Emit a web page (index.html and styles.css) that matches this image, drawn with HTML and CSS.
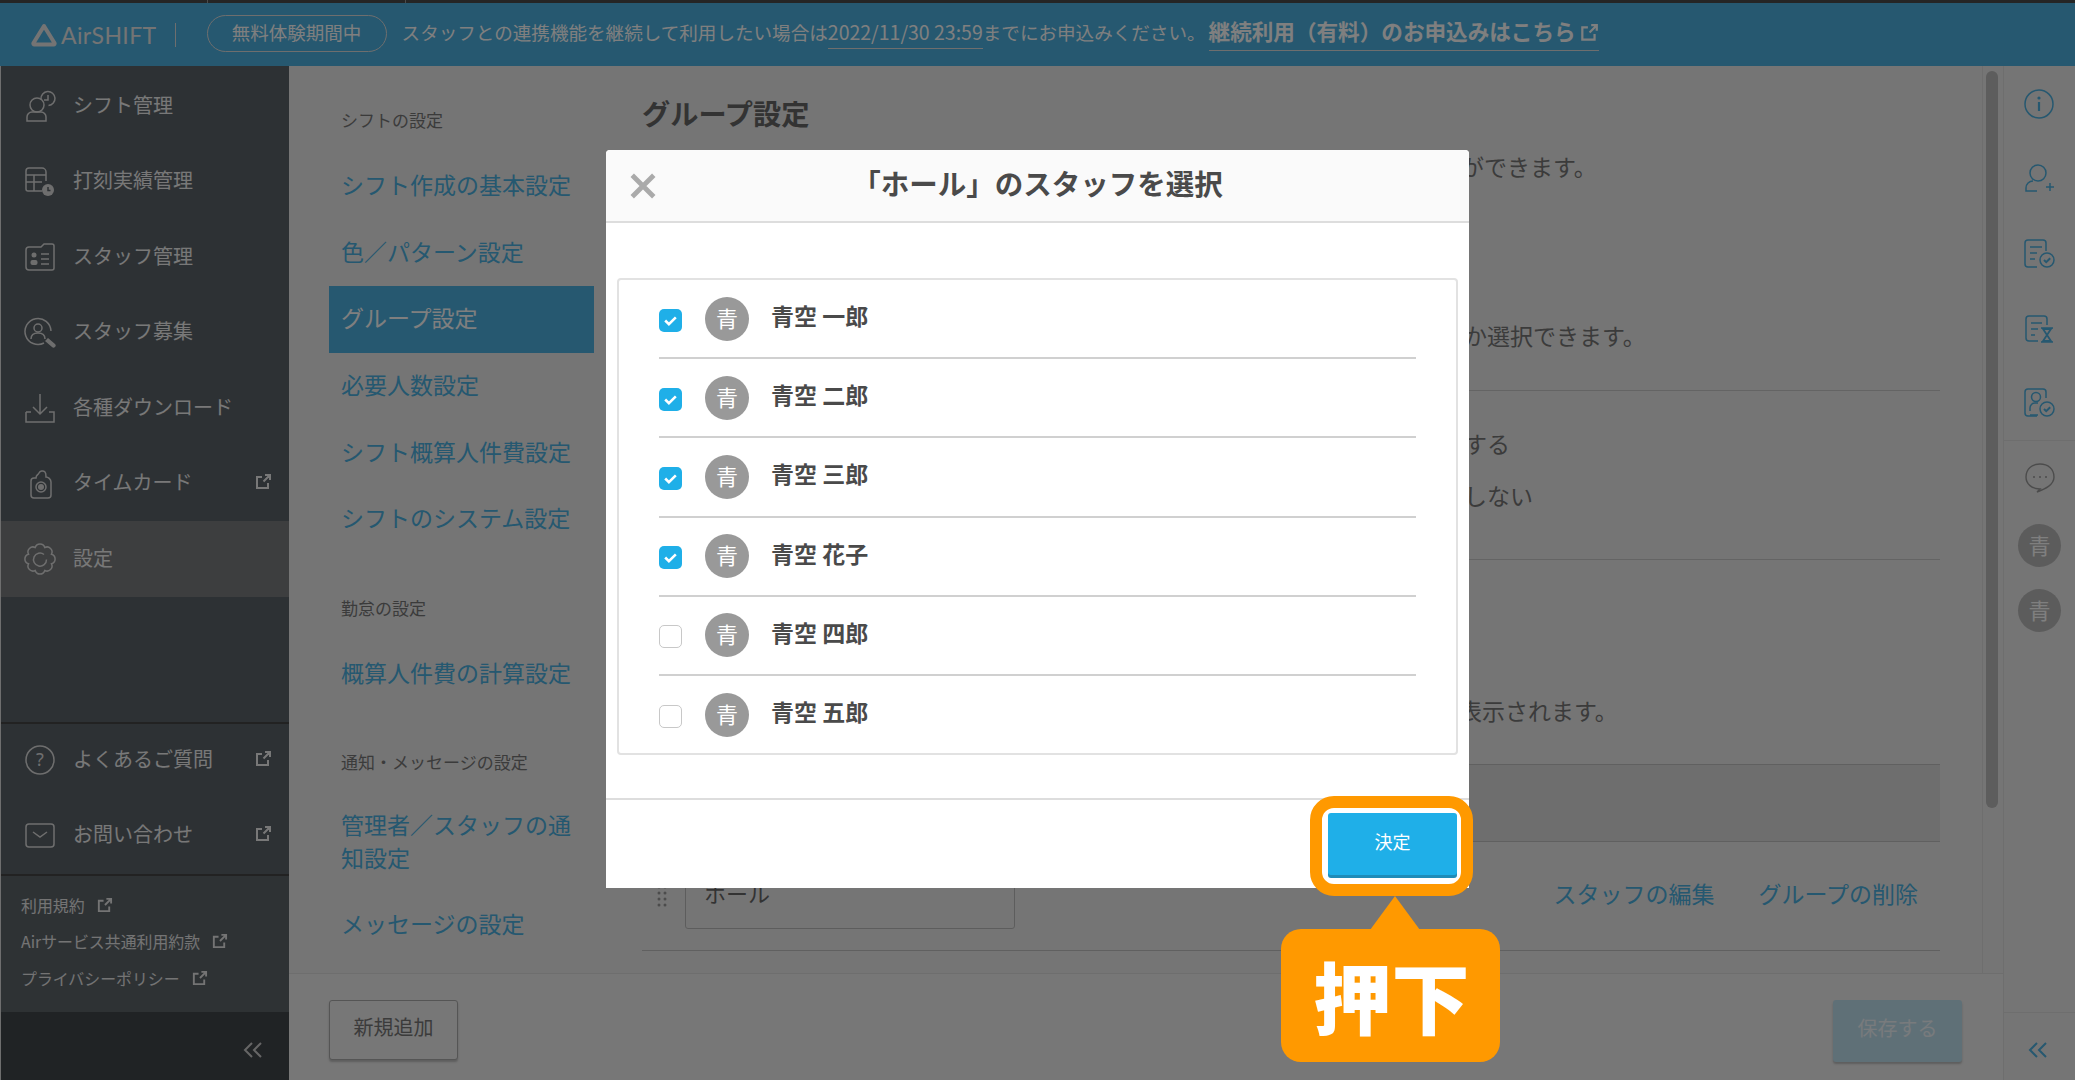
FILE: index.html
```html
<!DOCTYPE html>
<html lang="ja">
<head>
<meta charset="utf-8">
<title>AirSHIFT グループ設定</title>
<link rel="stylesheet" href="styles.css">
</head>
<body>
<svg class="defs" width="0" height="0">
  <symbol id="ext" viewBox="0 0 18 18"><path d="M8 4H3v11h11v-5M9.500 8.500 16 2M11 2h5v5" fill="none" stroke="currentColor" stroke-width="2"/></symbol>
  <symbol id="chev" viewBox="0 0 20 20"><path d="M9 3 2 10l7 7M18 3l-7 7 7 7" fill="none" stroke="currentColor" stroke-width="2"/></symbol>
</svg>
<div class="strip"><i></i><i></i></div>
<header class="topbar">
  <div class="logo">
    <svg class="logo-mark" viewBox="0 0 26 24"><path d="M13 3 23.500 20a1 1 0 0 1-1 1.500h-19a1 1 0 0 1-1-1.500z" fill="none" stroke="currentColor" stroke-width="4" stroke-linejoin="round"/></svg>
    <span class="logo-text">AirSHIFT</span>
  </div>
  <span class="logo-sep"></span>
  <span class="badge">無料体験期間中</span>
  <span class="notice">スタッフとの連携機能を継続して利用したい場合は<span class="date">2022/11/30 23:59</span>までにお申込みください。</span>
  <a class="cta">継続利用（有料）のお申込みはこちら<svg class="ext-cta"><use href="#ext"/></svg></a>
</header>
<div class="app">
  <aside class="sidebar">
    <nav class="side-nav">
      <a class="side-item"><svg class="side-ico" viewBox="0 0 32 32"><g fill="none" stroke="currentColor" stroke-width="1.500"><circle cx="13" cy="15" r="7"/><path d="M3 31v-4a5 5 0 0 1 5-5h9a5 5 0 0 1 5 5v4z"/><path d="M17 9a7 7 0 1 1 7.500 6.500M24 5v5h-4"/></g></svg><span>シフト管理</span></a>
      <a class="side-item"><svg class="side-ico" viewBox="0 0 32 32"><g fill="none" stroke="currentColor" stroke-width="1.500"><path d="M22 16V7a4 4 0 0 0-4-4H5a3 3 0 0 0-3 3v18a2 2 0 0 0 2 2h14M2 10h20M2 17h16M10 10v16"/></g><circle cx="24" cy="25" r="6" fill="currentColor"/><path d="M24 22v3.500h2.500" fill="none" stroke="#5a6268" stroke-width="1.500"/></svg><span>打刻実績管理</span></a>
      <a class="side-item"><svg class="side-ico" viewBox="0 0 32 32"><g fill="none" stroke="currentColor" stroke-width="1.500"><path d="M2 9a3 3 0 0 1 3-3h12l3-3h8a2 2 0 0 1 2 2v22a2 2 0 0 1-2 2H5a3 3 0 0 1-3-3z"/><path d="M17 13h8M17 18h8M17 23h8"/></g><circle cx="10" cy="14" r="2.500" fill="currentColor"/><rect x="6.500" y="19" width="7" height="5" rx="2" fill="currentColor"/></svg><span>スタッフ管理</span></a>
      <a class="side-item"><svg class="side-ico" viewBox="0 0 32 32"><g fill="none" stroke="currentColor" stroke-width="1.500"><path d="M20 27A13 13 0 1 1 27 15"/><circle cx="14" cy="12" r="4"/><path d="M7 23c0-4 3-6 7-6s7 2 7 6"/></g><path d="m21 25 3-3 7 6a2 2 0 0 1-3 3z" fill="currentColor"/></svg><span>スタッフ募集</span></a>
      <a class="side-item"><svg class="side-ico" viewBox="0 0 32 32"><path d="M16 2v20M9 15l7 7 7-7M2 20v10h28V20H25M7 20H2" fill="none" stroke="currentColor" stroke-width="1.500"/></svg><span>各種ダウンロード</span></a>
      <a class="side-item"><svg class="side-ico" viewBox="0 0 32 32"><g fill="none" stroke="currentColor" stroke-width="1.500"><path d="M7 14a3 3 0 0 1 3-3h2c0-3 2-3 3-5 1-2 4-3 6-1 1 1 1 3 1 5 2 0 5 2 5 5v13a3 3 0 0 1-3 3H10a3 3 0 0 1-3-3z"/><circle cx="17" cy="20" r="5"/></g><circle cx="17" cy="20" r="3" fill="currentColor"/></svg><span>タイムカード</span><svg class="ext"><use href="#ext"/></svg></a>
      <a class="side-item is-active"><svg class="side-ico" viewBox="0 0 32 32"><g fill="none" stroke="currentColor" stroke-width="1.500"><path d="M20.800 4.500A5 5 0 0 1 27.500 11.200 5 5 0 0 1 27.500 20.800 5 5 0 0 1 20.800 27.500 5 5 0 0 1 11.200 27.500 5 5 0 0 1 4.500 20.800 5 5 0 0 1 4.500 11.200 5 5 0 0 1 11.200 4.500 5 5 0 0 1 20.800 4.500z"/><path d="M20 11.500a6.500 6.500 0 1 0 2.500 5"/></g></svg><span>設定</span></a>
    </nav>
    <div class="side-bottom">
      <a class="side-item"><svg class="side-ico" viewBox="0 0 32 32"><circle cx="16" cy="16" r="14" fill="none" stroke="currentColor" stroke-width="1.500"/><text x="16" y="22" text-anchor="middle" class="q-mark">?</text></svg><span>よくあるご質問</span><svg class="ext"><use href="#ext"/></svg></a>
      <a class="side-item"><svg class="side-ico" viewBox="0 0 32 32"><rect x="2" y="5" width="28" height="23" rx="3" fill="none" stroke="currentColor" stroke-width="1.500"/><path d="m9 13 7 5 7-5" fill="none" stroke="currentColor" stroke-width="1.500"/></svg><span>お問い合わせ</span><svg class="ext"><use href="#ext"/></svg></a>
      <div class="legal">
        <a>利用規約<svg class="ext-s"><use href="#ext"/></svg></a>
        <a>Airサービス共通利用約款<svg class="ext-s"><use href="#ext"/></svg></a>
        <a>プライバシーポリシー<svg class="ext-s"><use href="#ext"/></svg></a>
      </div>
      <div class="side-collapse"><svg class="chev"><use href="#chev"/></svg></div>
    </div>
  </aside>

  <div class="work">
    <div class="work-main">
      <nav class="subnav">
        <p class="sub-label">シフトの設定</p>
        <a class="sub-item">シフト作成の基本設定</a>
        <a class="sub-item">色／パターン設定</a>
        <a class="sub-item is-active">グループ設定</a>
        <a class="sub-item">必要人数設定</a>
        <a class="sub-item">シフト概算人件費設定</a>
        <a class="sub-item">シフトのシステム設定</a>
        <p class="sub-label gap-a">勤怠の設定</p>
        <a class="sub-item">概算人件費の計算設定</a>
        <p class="sub-label gap-b">通知・メッセージの設定</p>
        <a class="sub-item multi">管理者／スタッフの通知設定</a>
        <a class="sub-item">メッセージの設定</a>
      </nav>
      <section class="content">
        <h1 class="title">グループ設定</h1>
        <p class="tail t1">ができます。</p>
        <p class="tail t2">か選択できます。</p>
        <hr class="rule r1">
        <p class="tail t3">する</p>
        <p class="tail t4">しない</p>
        <hr class="rule r2">
        <p class="tail t5">表示されます。</p>
        <div class="band"></div>
        <div class="group-row">
          <svg class="grip" viewBox="0 0 10 24"><g fill="currentColor"><circle cx="2" cy="3" r="1.500"/><circle cx="8" cy="3" r="1.500"/><circle cx="2" cy="9" r="1.500"/><circle cx="8" cy="9" r="1.500"/><circle cx="2" cy="15" r="1.500"/><circle cx="8" cy="15" r="1.500"/><circle cx="2" cy="21" r="1.500"/><circle cx="8" cy="21" r="1.500"/></g></svg>
          <div class="field">ホール</div>
          <a class="row-link first">スタッフの編集</a>
          <a class="row-link">グループの削除</a>
        </div>
      </section>
      <div class="track"><div class="thumb"></div></div>
    </div>
    <footer class="work-foot">
      <button class="btn-new">新規追加</button>
      <button class="btn-save">保存する</button>
    </footer>
  </div>

  <aside class="rail">
    <div class="rail-top">
      <svg class="rail-ico" viewBox="0 0 32 32"><circle cx="16" cy="16" r="14" fill="none" stroke="currentColor" stroke-width="1.500"/><circle cx="16" cy="10" r="1.600" fill="currentColor"/><path d="M16 14v9" stroke="currentColor" stroke-width="2.200"/></svg>
      <svg class="rail-ico" viewBox="0 0 32 32"><g fill="none" stroke="currentColor" stroke-width="1.500"><circle cx="15" cy="10" r="8"/><path d="M14 28H3v-3a7 7 0 0 1 7-7M23 24h8M27 20v8"/></g></svg>
      <svg class="rail-ico" viewBox="0 0 32 32"><g fill="none" stroke="currentColor" stroke-width="1.500"><path d="M23 14V6a3 3 0 0 0-3-3H5a3 3 0 0 0-3 3v21a3 3 0 0 0 3 3h9M7 10h12M7 16h7M7 22h5"/><circle cx="24" cy="23" r="7"/><path d="m21 23 2.200 2.200 4-4" stroke-width="2"/></g></svg>
      <svg class="rail-ico" viewBox="0 0 32 32"><g fill="none" stroke="currentColor" stroke-width="1.500"><path d="M24 13V7a3 3 0 0 0-3-3H6a3 3 0 0 0-3 3v19a3 3 0 0 0 3 3h9M8 11h11M8 17h7M8 23h4M18 16h12M18 30h12"/></g><path d="M20 17h8l-4 6 4 6h-8l4-6z" fill="none" stroke="currentColor" stroke-width="1.800"/></svg>
      <svg class="rail-ico" viewBox="0 0 32 32"><g fill="none" stroke="currentColor" stroke-width="1.500"><path d="M23 12V6a3 3 0 0 0-3-3H5a3 3 0 0 0-3 3v21a3 3 0 0 0 3 3h9"/><circle cx="13" cy="11" r="4.500"/><path d="M7 25v-3a5 5 0 0 1 5-5h3M7 29h8"/><circle cx="24" cy="23" r="7"/><path d="m21 23 2.200 2.200 4-4" stroke-width="2"/></g></svg>
    </div>
    <div class="rail-mid">
      <svg class="rail-chat" viewBox="0 0 32 32"><path d="M16 2c8 0 14 5 14 13 0 8-9 12-17 15l3-3C8 27 2 22 2 15 2 7 8 2 16 2z" fill="none" stroke="currentColor" stroke-width="1.400"/><g fill="currentColor"><circle cx="10" cy="15" r="1"/><circle cx="16" cy="15" r="1"/><circle cx="22" cy="15" r="1"/></g></svg>
      <span class="rail-avatar">青</span>
      <span class="rail-avatar">青</span>
    </div>
    <div class="rail-foot"><svg class="chev-blue"><use href="#chev"/></svg></div>
  </aside>
</div>

<div class="overlay"></div>

<div class="modal">
  <div class="modal-head">
    <svg class="modal-close" viewBox="0 0 26 26"><path d="m3 3 20 20M23 3 3 23" fill="none" stroke="currentColor" stroke-width="4.500"/></svg>
    <h2 class="modal-title">「ホール」のスタッフを選択</h2>
  </div>
  <div class="modal-body">
    <ul class="staff-list">
      <li class="staff"><span class="check on"><svg viewBox="0 0 16 16"><path d="m3 8 3.500 3.500L13 5" fill="none" stroke="#fff" stroke-width="2.400"/></svg></span><span class="avatar">青</span><span class="name">青空 一郎</span></li>
      <li class="staff"><span class="check on"><svg viewBox="0 0 16 16"><path d="m3 8 3.500 3.500L13 5" fill="none" stroke="#fff" stroke-width="2.400"/></svg></span><span class="avatar">青</span><span class="name">青空 二郎</span></li>
      <li class="staff"><span class="check on"><svg viewBox="0 0 16 16"><path d="m3 8 3.500 3.500L13 5" fill="none" stroke="#fff" stroke-width="2.400"/></svg></span><span class="avatar">青</span><span class="name">青空 三郎</span></li>
      <li class="staff"><span class="check on"><svg viewBox="0 0 16 16"><path d="m3 8 3.500 3.500L13 5" fill="none" stroke="#fff" stroke-width="2.400"/></svg></span><span class="avatar">青</span><span class="name">青空 花子</span></li>
      <li class="staff"><span class="check"></span><span class="avatar">青</span><span class="name">青空 四郎</span></li>
      <li class="staff"><span class="check"></span><span class="avatar">青</span><span class="name">青空 五郎</span></li>
    </ul>
  </div>
  <div class="modal-foot"><button class="btn-ok">決定</button></div>
</div>

<div class="ring"></div>
<div class="callout">押下</div>
</body>
</html>
```

FILE: styles.css
```css
* { box-sizing: border-box; }
html, body { margin: 0; height: 1080px; overflow: hidden; }
body {
  position: relative;
  display: flex;
  flex-direction: column;
  font-family: "Noto Sans CJK JP", "Noto Sans", sans-serif;
  background: #eaeaea;
  color: #444;
}
a { color: inherit; text-decoration: none; }
p, h1, h2, ul { margin: 0; padding: 0; }
.defs { position: absolute; }

.strip { height: 3px; background: #4a4a4a; display: flex; }
.strip i { width: 1px; background: #999; margin-left: 207px; }
.strip i + i { margin-left: 197px; }

.topbar {
  height: 63px;
  flex: none;
  background: #4cb0e0;
  color: #fff;
  display: flex;
  align-items: center;
  padding-left: 31px;
}
.logo { display: flex; align-items: center; color: #e8e8e8; }
.logo-mark { width: 26px; height: 24px; }
.logo-text { font-family: "Lato", sans-serif; font-size: 23px; margin-left: 4px; letter-spacing: .4px; line-height: 24px; }
.logo-sep { width: 1px; height: 24px; background: #ddd; margin-left: 18px; }
.badge {
  width: 180px; height: 37px;
  margin-left: 31px;
  border: 1.500px solid #ddd;
  border-radius: 19px;
  font-size: 18.500px;
  line-height: 32px;
  text-align: center;
  margin-top: -2px;
}
.notice { font-size: 18.570px; margin-left: 15px; white-space: nowrap; margin-top: -7px; }
.date { border-bottom: 1px solid #ddd; padding-bottom: 2px; font-size: 19.500px; }
.cta {
  font-size: 21.600px; font-weight: 700; margin-left: 3px; white-space: nowrap;
  border-bottom: 1.500px solid #ddd; display: flex; align-items: center; height: 35px; margin-top: -2px; padding-bottom: 6px;
}
.ext-cta { width: 20px; height: 20px; margin: 5px 0 0 3px; }

.app { flex: 1; display: flex; min-height: 0; }

.sidebar {
  width: 289px; flex: none;
  border-left: 1px solid #ddd;
  background: #5a6268;
  color: #fff;
  display: flex; flex-direction: column;
  justify-content: space-between;
}
.side-nav { padding-top: 2px; }
.side-item {
  height: 75.500px;
  display: flex; align-items: center;
  font-size: 20px;
  padding: 0 17px 3px 23px;
  color: #f0f0f0;
}
.side-item span { margin-left: 17px; flex: 1; }
.side-item.is-active { background: #7a7c7e; }
.side-ico { width: 32px; height: 32px; flex: none; color: #ddd; margin-top: 3px; }
.q-mark { font-size: 18px; fill: currentColor; font-family: "Noto Sans", sans-serif; }
.ext { width: 18px; height: 18px; flex: none; }
.side-bottom { border-top: 2px solid #444; }
.side-bottom .side-item { height: 75px; padding-bottom: 6px; }
.legal {
  height: 138px;
  border-top: 2px solid #444;
  padding: 11px 0 0 20px;
  font-size: 15.900px;
  color: #e8e8e8;
  background: #5c6468;
}
.legal a { display: flex; align-items: center; height: 36.500px; }
.ext-s { width: 17px; height: 17px; margin-left: 11px; }
.side-collapse { height: 68px; background: #41474b; display: flex; align-items: center; justify-content: flex-end; padding: 8px 26px 0 0; }
.chev { width: 20px; height: 20px; color: #ccc; }

.work { flex: 1; display: flex; flex-direction: column; min-width: 0; }
.work-main { flex: 1; display: flex; min-height: 0; overflow: hidden; }
.subnav { width: 317px; flex: none; padding: 41px 0 0 40px; }
.sub-label { font-size: 17px; line-height: 26px; color: #777; padding-left: 12px; }
.sub-item { display: flex; align-items: center; width: 265px; height: 66.600px; padding: 0 12px 4px; font-size: 23px; color: #4ab0e0; }
.sub-item.is-active { background: #4cb0e0; color: #fff; }
.sub-label + .sub-item { margin-top: 20px; }
.sub-item.multi { height: 66px; line-height: 33px; margin-top: 33px; padding-bottom: 0; margin-bottom: 18px; }
.gap-a { margin-top: 42px; }
.gap-b { margin-top: 42px; }

.content { flex: 1; min-width: 0; padding: 28px 42px 0 36px; }
.title { font-size: 28.200px; font-weight: 700; line-height: 38px; color: #666; margin-bottom: 2px; }
.tail { font-size: 23px; line-height: 32px; color: #777; padding-left: 822px; white-space: nowrap; }
.t1 { margin-top: 18px; padding-left: 819px; }
.t2 { margin-top: 137px; }
.t3 { margin-top: 36px; }
.t4 { margin-top: 20px; }
.t5 { margin-top: 134px; padding-left: 817px; }
.rule { margin: 0; border: 0; height: 1px; background: #c8c8c8; }
.r1 { margin-top: 39px; }
.r2 { margin-top: 48px; }
.band { margin-top: 38px; height: 78px; background: #dcdcdc; border-bottom: 1px solid #c0c0c0; border-top: 1px solid #c0c0c0; }
.group-row { height: 109px; border-bottom: 1px solid #c0c0c0; display: flex; align-items: center; padding-right: 22px; }
.grip { width: 10px; height: 24px; margin-left: 15px; color: #999; }
.field { width: 330px; height: 67px; margin: -2px 0 0 18px; background: #ebebeb; border: 1.500px solid #bbb; border-radius: 3px; padding-left: 18px; font-size: 22px; line-height: 58px; color: #666; }
.row-link { font-size: 23px; color: #4ab0e0; margin-left: 44px; padding-bottom: 6px; }
.row-link.first { margin-left: auto; }

.track { width: 21px; flex: none; border-left: 1px solid #dcdcdc; padding: 5px 5px 0 3px; }
.thumb { height: 737px; border-radius: 6px; background: #bababa; width: 12px; }

.work-foot {
  height: 107px; flex: none;
  background: #eeeeee;
  border-top: 1px solid #dddddd;
  display: flex; justify-content: space-between;
  padding: 26px 41px 0 40px;
}
.btn-new, .btn-save { font-family: inherit; font-size: 20px; height: 60px; border-radius: 3px; padding-bottom: 8px; }
.btn-new { width: 129px; background: #eee; border: 1.500px solid #aaa; color: #777; box-shadow: 0 2px 2px #bbb; }
.btn-save { width: 129px; border: 0; color: #f0f6fa; background: #bfe0ef; box-shadow: 0 2px 2px #bbb; height: 62px; }

.rail { width: 72px; flex: none; border-left: 1px solid #dcdcdc; display: flex; flex-direction: column; }
.rail-top { height: 375px; border-bottom: 1px solid #dcdcdc; display: flex; flex-direction: column; align-items: center; padding: 22px 2px 0 0; gap: 42.500px; color: #4cb0e0; }
.rail-ico { width: 32px; height: 32px; flex: none; }
.rail-mid { flex: 1; display: flex; flex-direction: column; align-items: center; padding-top: 21px; }
.rail-chat { width: 32px; height: 32px; color: #999; margin-bottom: 30px; }
.rail-avatar { width: 43px; height: 43px; border-radius: 50%; background: #b8b8b8; color: #fff; font-size: 22px; line-height: 41px; text-align: center; margin-bottom: 22px; }
.rail-foot { height: 68px; border-top: 1px solid #dcdcdc; display: flex; align-items: center; justify-content: center; padding: 6px 4px 0 0; }
.chev-blue { width: 20px; height: 20px; color: #4cb0e0; }

.overlay { position: absolute; inset: 0; background: rgba(0, 0, 0, .5); }

.modal {
  position: absolute; left: 606px; top: 150px;
  width: 863px; height: 738px;
  background: #fff;
  border-radius: 4px 4px 0 0;
  display: flex; flex-direction: column;
}
.modal-head { position: relative; height: 73px; flex: none; background: #fafafa; border-bottom: 2px solid #ddd; display: flex; align-items: center; justify-content: center; border-radius: 4px 4px 0 0; padding-bottom: 6px; }
.modal-close { position: absolute; left: 23px; top: 22px; width: 28px; height: 28px; color: #aaa; }
.modal-title { font-size: 28.500px; font-weight: 700; color: #4a4a4a; }
.modal-body { flex: 1; padding: 55px 11px 0; }
.staff-list { list-style: none; border: 2px solid #e2e2e2; border-radius: 4px; height: 477px; padding: 0 40px; }
.staff { height: 79.200px; border-bottom: 2px solid #d0d0d0; display: flex; align-items: center; }
.staff:last-child { border-bottom-color: transparent; }
.check { width: 23px; height: 23px; border-radius: 5px; border: 1.500px solid #c8c8c8; background: #fff; margin-top: 3px; }
.check.on { background: #1fafe8; border: 0; padding: 3px; display: block; }
.check svg { display: block; width: 17px; height: 17px; }
.avatar { width: 44px; height: 44px; margin-left: 23px; border-radius: 50%; background: #999; color: #fff; font-size: 22px; line-height: 40px; text-align: center; }
.name { margin-left: 22px; font-size: 23px; font-weight: 700; color: #4a4a4a; margin-top: -7px; }
.modal-foot { height: 90px; flex: none; border-top: 2px solid #ddd; display: flex; justify-content: flex-end; padding: 13px 12px 0 0; }
.btn-ok { width: 129px; height: 62px; border: 0; border-radius: 3px; background: #1fafe8; box-shadow: 0 3px 0 #1f8cb8; color: #fff; font-family: inherit; font-size: 18px; padding-bottom: 7px; }

.ring { position: absolute; left: 1310px; top: 796px; width: 163px; height: 100px; border: 12px solid #ff9900; border-radius: 24px; }
.callout {
  position: absolute; left: 1281px; top: 929px;
  width: 219px; height: 133px;
  padding-left: 2px;
  background: #ff9900; border-radius: 20px;
  color: #fff; font-size: 78px; font-weight: 900;
  line-height: 133px; text-align: center;
}
.callout::before {
  content: ""; position: absolute; left: 89px; top: -33px;
  border-left: 25px solid transparent; border-right: 25px solid transparent;
  border-bottom: 34px solid #ff9900;
}
```
